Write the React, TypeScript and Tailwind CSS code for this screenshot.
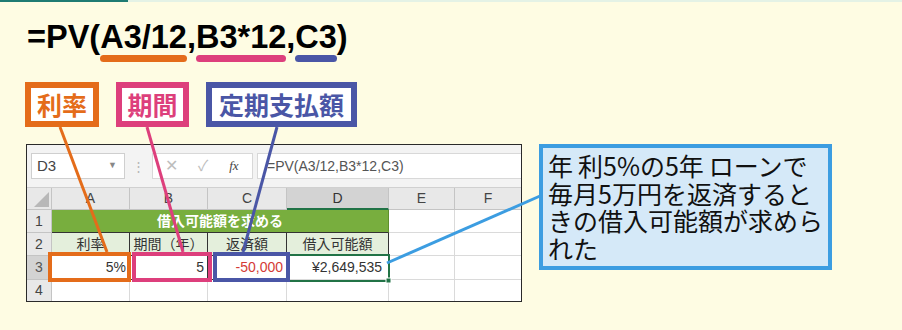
function Arg({ text, bar }: { text: string; bar: string }) {
  return (
    <span className="flex flex-col">
      <span>{text}</span>
      <span className={bar} />
    </span>
  )
}

function Label({ text, box }: { text: string; box: string }) {
  return (
    <div className={box}>
      <span>{text}</span>
    </div>
  )
}

export default function App() {
  return (
    <div className="relative h-[330px] w-[902px] overflow-hidden bg-[#fefce3]">
      {/* top stripe */}
      <div className="flex h-[2px]">
        <div className="w-[128px] bg-[#1f7b72]" />
        <div className="flex-1 bg-[#e4f2e6]" />
      </div>

      <div className="pl-[27px] pt-[19px]">
        {/* formula */}
        <div className="flex items-start font-['Liberation_Sans',sans-serif] text-[32.5px] font-bold leading-[32px] text-black">
          <span>=PV(</span>
          <Arg text="A3/12" bar="mt-[2px] h-[7px] rounded-full bg-[#e46c1a]" />
          <span>,</span>
          <Arg text="B3*12" bar="mt-[2px] h-[7px] rounded-full bg-[#dd3f7c]" />
          <span>,</span>
          <Arg text="C3" bar="mt-[2px] h-[7px] rounded-full bg-[#4a56a6]" />
          <span>)</span>
        </div>

        {/* labels */}
        <div className="-ml-[2px] mt-[20px] flex gap-[17px] font-['Noto_Sans_CJK_JP',sans-serif] text-[25px] font-bold leading-none">
          <Label text="利率" box="flex h-[45px] w-[74px] items-center justify-center border-[6px] border-[#e46c1a] bg-white text-[#e46c1a]" />
          <Label text="期間" box="flex h-[45px] w-[73px] items-center justify-center border-[6px] border-[#dd3f7c] bg-white text-[#dd3f7c]" />
          <Label text="定期支払額" box="flex h-[45px] w-[151px] items-center justify-center border-[6px] border-[#4a56a6] bg-white text-[#4a56a6]" />
        </div>

        <div className="-ml-[1px] mt-[17px] flex items-start gap-[17px]">
          {/* spreadsheet */}
          <div className="h-[158px] w-[496px] border border-[#2a2a2a] bg-white font-['Liberation_Sans','Noto_Sans_CJK_JP',sans-serif] text-[14px] text-[#333]">
            <div className="flex h-[43px] items-center border-b border-[#d0d0d0] bg-[#f3f3f3] pl-[4px]">
              <div className="flex h-[26px] w-[94px] items-center justify-between border border-[#cfcfcf] bg-white pl-[5px] pr-[7px] text-[15px] text-[#444]">
                <span>D3</span>
                <span className="text-[9px] text-[#888]">▼</span>
              </div>
              <div className="flex w-[27px] justify-center text-[13px] leading-none text-[#b5b5b5]">⋮</div>
              <div className="flex h-[26px] w-[101px] items-center border border-[#d8d8d8] bg-white pl-[12px] text-[#bdbdbd]">
                <span className="text-[16px]">✕</span>
                <span className="ml-[20px] text-[15px]">✓</span>
                <span className="ml-[21px] font-['Liberation_Serif',serif] text-[13px] italic text-[#444]">fx</span>
              </div>
              <div className="ml-[4px] flex h-[26px] flex-1 items-center border-y border-l border-[#d8d8d8] bg-white pl-[9px] text-[#555]">
                =PV(A3/12,B3*12,C3)
              </div>
            </div>

            <div className="grid grid-cols-[25px_78px_78px_79px_102px_66px_66px] grid-rows-[22px_23px_23px_24px_21px]">
              {/* header row */}
              <div className="relative border-r border-b border-[#c4c4c4] bg-[#e8e8e8]">
                <svg className="absolute bottom-[2px] right-[2px]" width="15" height="15" viewBox="0 0 15 15">
                  <path d="M15 0 L15 15 L0 15 Z" fill="#b8b8b8" />
                </svg>
              </div>
              <div className="flex items-center justify-center border-r border-b border-[#c4c4c4] bg-[#e8e8e8] text-[#444]">A</div>
              <div className="flex items-center justify-center border-r border-b border-[#c4c4c4] bg-[#e8e8e8] text-[#444]">B</div>
              <div className="flex items-center justify-center border-r border-b border-[#c4c4c4] bg-[#e8e8e8] text-[#444]">C</div>
              <div className="flex items-center justify-center border-r border-b-2 border-r-[#c4c4c4] border-b-[#217346] bg-[#d3d3d3] text-[#333]">D</div>
              <div className="flex items-center justify-center border-r border-b border-[#c4c4c4] bg-[#e8e8e8] text-[#444]">E</div>
              <div className="flex items-center justify-center border-b border-[#c4c4c4] bg-[#e8e8e8] text-[#444]">F</div>

              {/* row 1 */}
              <div className="flex items-center justify-center border-r border-b border-[#c4c4c4] bg-[#e8e8e8] text-[#444]">1</div>
              <div className="col-span-4 flex items-center justify-center border-r border-b border-r-[#5e8f2c] border-b-[#333] bg-[#78ae3e] font-bold text-white">
                借入可能額を求める
              </div>
              <div className="border-r border-b border-[#dadada]" />
              <div className="border-b border-[#dadada]" />

              {/* row 2 */}
              <div className="flex items-center justify-center border-r border-b border-[#c4c4c4] bg-[#e8e8e8] text-[#444]">2</div>
              <div className="flex items-center justify-center border-r border-b border-[#333] bg-[#e4efdc]">利率</div>
              <div className="flex items-center justify-center border-r border-b border-[#333] bg-[#e4efdc]">期間（年）</div>
              <div className="flex items-center justify-center border-r border-b border-[#333] bg-[#e4efdc]">返済額</div>
              <div className="flex items-center justify-center border-r border-b border-[#333] bg-[#e4efdc]">借入可能額</div>
              <div className="border-r border-b border-[#dadada]" />
              <div className="border-b border-[#dadada]" />

              {/* row 3 */}
              <div className="flex items-center justify-center border-r border-b border-[#c4c4c4] bg-[#d3d3d3] text-[#555]">3</div>
              <div className="flex items-center justify-end border-r border-b border-[#333] pr-[3px]">5%</div>
              <div className="flex items-center justify-end border-r border-b border-[#333] pr-[3px]">5</div>
              <div className="flex items-center justify-end border-r border-b border-[#333] pr-[3px] text-[#d43b36]">-50,000</div>
              <div className="flex items-center justify-end border-r border-b border-[#dadada] pr-[6px]">¥2,649,535</div>
              <div className="border-r border-b border-[#dadada]" />
              <div className="border-b border-[#dadada]" />

              {/* row 4 */}
              <div className="flex items-center justify-center border-r border-[#c4c4c4] bg-[#e8e8e8] text-[#444]">4</div>
              <div className="border-r border-[#dadada]" />
              <div className="border-r border-[#dadada]" />
              <div className="border-r border-[#dadada]" />
              <div className="border-r border-[#dadada]" />
              <div className="border-r border-[#dadada]" />
              <div />
            </div>
          </div>

          {/* callout */}
          <div className="flex h-[126px] w-[293px] flex-col border-4 border-[#3c9de1] bg-[#d5e9f8] pl-[5px] pt-[3px] font-['Noto_Sans_CJK_JP',sans-serif] text-[25px] leading-[28px] text-[#111]">
            <div className="h-[28px] whitespace-nowrap">
              年<span className="ml-[5px]">利5%の5年</span><span className="ml-[5px]">ローンで</span>
            </div>
            <div className="h-[27px] whitespace-nowrap">毎月5万円を返済すると</div>
            <div className="h-[28px] whitespace-nowrap">きの借入可能額が求めら</div>
            <div className="h-[28px] whitespace-nowrap">れた</div>
          </div>
        </div>
      </div>

      {/* annotation overlay: connector lines and cell highlights */}
      <svg className="pointer-events-none absolute inset-0" width="902" height="330" viewBox="0 0 902 330">
        <rect x="288" y="255" width="101" height="26" fill="none" stroke="#217346" strokeWidth="2" />
        <rect x="386" y="278" width="5" height="5" fill="#217346" stroke="white" strokeWidth="1" />
        <rect x="50" y="254" width="79" height="26" fill="none" stroke="#e46c1a" strokeWidth="4" />
        <rect x="134" y="254" width="76" height="26" fill="none" stroke="#dd3f7c" strokeWidth="4" />
        <rect x="215" y="254" width="73" height="26" fill="none" stroke="#4a56a6" strokeWidth="4" />
        <line x1="60" y1="127" x2="107" y2="252" stroke="#e46c1a" strokeWidth="3" />
        <line x1="147" y1="127" x2="183" y2="252" stroke="#dd3f7c" strokeWidth="3" />
        <line x1="277" y1="127" x2="243" y2="252" stroke="#4a56a6" strokeWidth="3" />
        <line x1="387" y1="263" x2="540" y2="196" stroke="#3c9de1" strokeWidth="3" />
      </svg>
    </div>
  )
}
